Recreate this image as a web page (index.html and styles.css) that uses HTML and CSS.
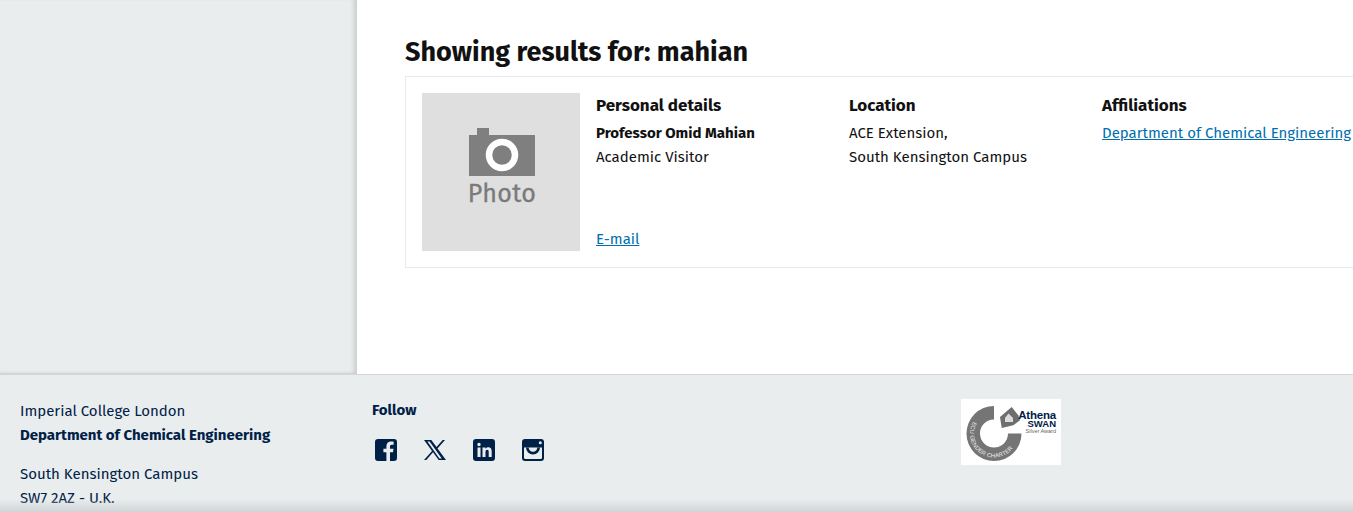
FILE: index.html
```html
<!DOCTYPE html>
<html lang="en">
<head>
<meta charset="utf-8">
<title>Search results</title>
<link rel="stylesheet" href="styles.css">
</head>
<body>
<div class="top">
  <aside class="side"></aside>
  <main class="main">
    <h1 class="title">Showing results for: mahian</h1>
    <article class="card">
      <svg class="photo" viewBox="0 0 158 158" aria-label="Photo placeholder">
        <rect width="158" height="158" fill="#dfdfdf"/>
        <path d="M47 42h8v-7h12v7h46v41H47z" fill="#7f7f7f"/>
        <circle cx="80" cy="62" r="13" fill="#7f7f7f" stroke="#fff" stroke-width="6.5"/>
        <text x="80" y="109" class="photo-text" text-anchor="middle">Photo</text>
      </svg>
      <section class="col col-person">
        <h2 class="col-head">Personal details</h2>
        <p class="line strong">Professor Omid Mahian</p>
        <p class="line">Academic Visitor</p>
        <a class="link email" href="#">E-mail</a>
      </section>
      <section class="col">
        <h2 class="col-head">Location</h2>
        <p class="line">ACE Extension,</p>
        <p class="line">South Kensington Campus</p>
      </section>
      <section class="col">
        <h2 class="col-head">Affiliations</h2>
        <p class="line nowrap"><a class="link" href="#">Department of Chemical Engineering</a></p>
      </section>
    </article>
  </main>
</div>
<footer class="footer">
  <div class="address">
    <p class="fline">Imperial College London</p>
    <p class="fline fstrong">Department of Chemical Engineering</p>
    <p class="fline fgap">South Kensington Campus</p>
    <p class="fline">SW7 2AZ - U.K.</p>
  </div>
  <div class="follow">
    <h3 class="follow-head">Follow</h3>
    <div class="icons">
      <svg class="icon" viewBox="0 0 24 24"><path fill="#002147" d="M4 1h16a3 3 0 0 1 3 3v16a3 3 0 0 1-3 3h-4v-8.800h3l.5-3.500H16V8.500c0-1 .4-1.700 1.800-1.700h1.800V3.700c-.6-.1-1.500-.2-2.600-.2-2.800 0-4.600 1.700-4.600 4.700v2.500H9.400V14.200h3V23H4a3 3 0 0 1-3-3V4a3 3 0 0 1 3-3z"/></svg>
      <svg class="icon" viewBox="0 0 24 24"><path fill="#002147" d="M1 2h7.300l5.200 7.100L19.700 2h2.300l-7.500 8.500L23 22h-7.300l-5.700-7.700L3.300 22H1l8-9.100zm3.400 1.500 12 17h2.400L6.600 3.500z"/></svg>
      <svg class="icon" viewBox="0 0 24 24"><path fill="#002147" fill-rule="evenodd" d="M4 1h16a3 3 0 0 1 3 3v16a3 3 0 0 1-3 3H4a3 3 0 0 1-3-3V4a3 3 0 0 1 3-3zm1.500 8.500V19h3V9.500zM7 4.800a1.700 1.700 0 1 0 0 3.400 1.700 1.700 0 0 0 0-3.400zM10.500 9.500V19h3v-5c0-1.400.6-2.200 1.700-2.200s1.500.8 1.500 2.200v5h3v-5.800c0-2.600-1.300-3.900-3.300-3.900-1.400 0-2.400.7-2.900 1.500V9.500z"/></svg>
      <svg class="icon" viewBox="0 0 24 24">
        <rect x="1" y="1" width="22" height="22" rx="3" fill="#002147"/>
        <circle cx="19.300" cy="4.700" r="1.500" fill="#eaedee"/>
        <path d="M3 9.500h18v10a1.500 1.500 0 0 1-1.500 1.500h-15A1.500 1.500 0 0 1 3 19.500z" fill="#eaedee"/>
        <path d="M5 9.500a7 7 0 0 0 14 0h-2.700a4.300 4.300 0 0 1-8.600 0z" fill="#002147"/>
      </svg>
    </div>
  </div>
  <svg class="swan" viewBox="0 0 100 66" aria-label="Athena SWAN Silver Award">
    <rect width="100" height="66" fill="#fff"/>
    <path d="M33 7A27.500 27.500 0 1 0 60.500 34.500H47A14 14 0 1 1 33 20.500z" fill="#757575"/>
    <path d="M50.700 8 57.300 16.300 59 21.300 52.300 26.300 40.700 29 39 18z" fill="#6e6e6e"/>
    <path d="M47.500 14.500 52 19v4h-8v-4z" fill="#dcdcdc"/>
    <text class="swan-a" x="95" y="19.500" text-anchor="end">Athena</text>
    <text class="swan-b" x="95" y="27.500" text-anchor="end">SWAN</text>
    <text class="swan-c" x="95" y="33.500" text-anchor="end">Silver Award</text>
    <path id="arc" d="M12.200 22.500A24 24 0 1 0 54.750 44.600" fill="none"/>
    <text class="swan-d"><textPath href="#arc">ECU GENDER CHARTER</textPath></text>
  </svg>
  <div class="fade"></div>
</footer>
</body>
</html>
```
FILE: styles.css
```css
* { box-sizing: border-box; }
html, body { margin: 0; height: 512px; overflow: hidden; }
body { font-family: "Fira Sans", "Noto Sans", "Open Sans", sans-serif; font-size: 15px; background: #eaedee; color: #111; }
.top { display: flex; height: 374px; }
.side { width: 357px; flex: none; background: #eaedee; box-shadow: inset -6px 0 5px -3px #c9cdcf, inset 0 -3px 3px -2px #c9cdcf; }
.main { flex: 1; min-width: 0; background: #fff; padding: 34px 0 0 48px; overflow: hidden; }
.title { margin: 0 0 6px; font-size: 27px; line-height: 36px; font-weight: 700; color: #111; }
.card { display: flex; width: 960px; height: 192px; padding: 16px; border: 1px solid #e8e8f0; }
.photo { width: 158px; height: 158px; flex: none; margin-right: 16px; }
.photo-text { font-family: "Fira Sans", "Noto Sans", sans-serif; font-size: 25px; font-weight: 400; letter-spacing: 0.4px; fill: #7a7a7a; stroke: #7a7a7a; stroke-width: 0.3px; }
.col { width: 253px; flex: none; position: relative; }
.col-head { margin: 2px 0 4px; font-size: 17px; line-height: 22px; font-weight: 700; color: #111; }
.line { margin: 0; line-height: 24px; font-size: 15px; color: #111; }
.strong { font-weight: 700; }
.nowrap { white-space: nowrap; }
.link { color: #006eaf; text-decoration: underline; }
.col-person { display: flex; flex-direction: column; }
.email { margin-top: auto; line-height: 24px; font-size: 15px; }
.footer { position: relative; height: 138px; border-top: 1px solid #d3d6d8; background: #eaedee; color: #002147; display: flex; overflow: hidden; }
.address { width: 372px; flex: none; padding: 24px 0 0 20px; }
.fline { margin: 0; font-size: 15px; line-height: 24px; white-space: nowrap; }
.fstrong { font-weight: 700; }
.fgap { margin-top: 15px; }
.follow { width: 589px; flex: none; padding: 24px 0 0 0; }
.follow-head { margin: 0; font-size: 15px; line-height: 22px; font-weight: 700; }
.icons { display: flex; gap: 25px; margin-top: 17px; padding-left: 2px; }
.icon { width: 24px; height: 24px; flex: none; }
.swan { width: 100px; height: 66px; margin-top: 24px; flex: none; }
.swan-a { font: 700 11.500px "Liberation Sans", sans-serif; fill: #002147; letter-spacing: -0.2px; }
.swan-b { font: 700 9.500px "Liberation Sans", sans-serif; fill: #002147; }
.swan-c { font: 5.500px "Liberation Sans", sans-serif; fill: #666; }
.swan-d { font: 5.800px "Liberation Sans", sans-serif; fill: #eee; letter-spacing: 0.2px; }
.fade { position: absolute; left: 0; right: 0; bottom: 0; height: 13px; background: linear-gradient(to bottom, rgba(210, 213, 215, 0), rgba(210, 213, 215, 1)); pointer-events: none; }
```
